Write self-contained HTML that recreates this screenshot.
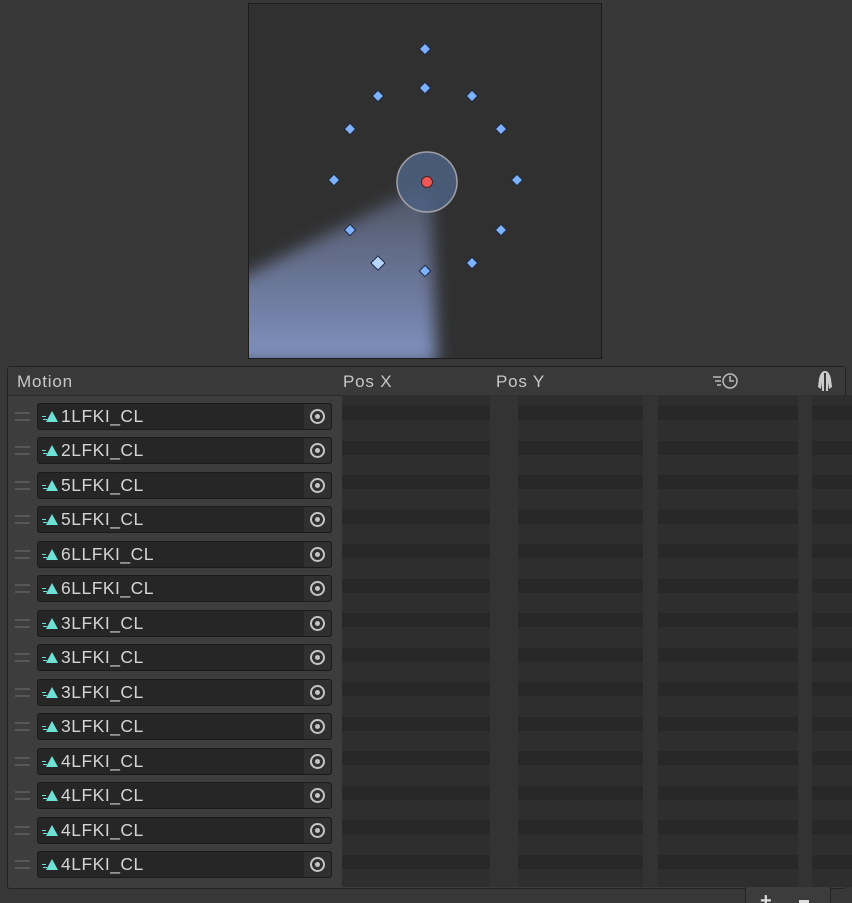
<!DOCTYPE html>
<html style="overflow:hidden;height:903px"><head><style>
body{margin:0;width:852px;height:903px;background:#383838;position:relative;overflow:hidden;font-family:"Liberation Sans",sans-serif}
.bt{position:absolute;left:248px;top:3px;width:352px;height:354px;background:#303030;border:1px solid #1c1c1c;overflow:hidden}
.panel{position:absolute;left:7px;top:366px;width:837px;height:521px;border:1px solid #232323;border-radius:3px;background:#3d3d3d}
.hdr{position:absolute;left:0;top:0;width:837px;height:28px;background:#393939;border-bottom:1px solid #2a2a2a;color:#c8c8c8;font-size:17px;letter-spacing:.8px}
.hdr span{position:absolute;top:5px}
.data{position:absolute;left:342px;top:395px;width:510px;height:492px;background:#2e2e2e}
.row{position:absolute;left:0;height:14px;width:510px;background:#282828}
.vc{position:absolute;top:395px;height:492px;background:#333}
.f{position:absolute;left:37px;width:293px;height:25px;background:#262626;border:1px solid #1b1b1b;border-radius:3px;color:#d4d4d4;font-size:17.5px;letter-spacing:.5px;line-height:25px}
.f b{position:absolute;right:0;top:0;width:27px;height:25px;background:#303030;border-radius:0 3px 3px 0}
.f b:after{content:"";position:absolute;left:6px;top:5px;width:11px;height:11px;border:2px solid #c4c4c4;border-radius:50%}
.f b:before{content:"";position:absolute;left:11px;top:10px;width:5px;height:5px;background:#c4c4c4;border-radius:50%}
.f em{position:absolute;left:8px;top:7px;width:0;height:0;border-left:6px solid transparent;border-right:6px solid transparent;border-bottom:11px solid #6fe0d6}
.f em:before{content:"";position:absolute;left:-10px;top:5px;width:4px;height:1px;background:#6fe0d6;box-shadow:1px 3px 0 #6fe0d6}
.f span{position:absolute;left:23px}
.h{position:absolute;left:15px;width:15px;height:5px;border-top:2px solid #575757;border-bottom:2px solid #575757}
</style></head><body>
<div class="bt">
<svg width="352" height="354" viewBox="0 0 352 354">
<defs>
<linearGradient id="g" x1="0" y1="0" x2="0" y2="1"><stop offset="0" stop-color="#8a9ccc" stop-opacity=".35"/><stop offset="1" stop-color="#8597c9" stop-opacity=".95"/></linearGradient>
<filter id="bl"><feGaussianBlur stdDeviation="8"/></filter>
</defs>
<polygon points="168,185 182,185 188,360 -40,360 -40,290" fill="url(#g)" filter="url(#bl)"/>
<circle cx="178" cy="178" r="30" fill="#4e6282" fill-opacity=".85" stroke="#a0a0a8" stroke-width="1.5"/>
<circle cx="178" cy="178" r="5.5" fill="#ef5656" stroke="#4a2020"/>
<g fill="#7eb2ff" stroke="#1d2a44" stroke-width="1">
<rect x="-4" y="-4" width="8" height="8" transform="translate(176,45) rotate(45)"/>
<rect x="-4" y="-4" width="8" height="8" transform="translate(176,84) rotate(45)"/>
<rect x="-4" y="-4" width="8" height="8" transform="translate(129,92) rotate(45)"/>
<rect x="-4" y="-4" width="8" height="8" transform="translate(223,92) rotate(45)"/>
<rect x="-4" y="-4" width="8" height="8" transform="translate(101,125) rotate(45)"/>
<rect x="-4" y="-4" width="8" height="8" transform="translate(252,125) rotate(45)"/>
<rect x="-4" y="-4" width="8" height="8" transform="translate(85,176) rotate(45)"/>
<rect x="-4" y="-4" width="8" height="8" transform="translate(268,176) rotate(45)"/>
<rect x="-4" y="-4" width="8" height="8" transform="translate(101,226) rotate(45)"/>
<rect x="-4" y="-4" width="8" height="8" transform="translate(252,226) rotate(45)"/>
<rect x="-5" y="-5" width="10" height="10" fill="#b7d4ff" transform="translate(129,259) rotate(45)"/>
<rect x="-4" y="-4" width="8" height="8" transform="translate(176,267) rotate(45)"/>
<rect x="-4" y="-4" width="8" height="8" transform="translate(223,259) rotate(45)"/>
</g>
</svg>
</div>
<div class="panel"><div class="hdr"><span style="left:9px">Motion</span><span style="left:335px">Pos X</span><span style="left:488px">Pos Y</span>
<svg style="position:absolute;left:704px;top:5px" width="32" height="18"><g stroke="#bbb" stroke-width="1.5" fill="none"><line x1="1" y1="5" x2="9" y2="5"/><line x1="3" y1="9" x2="9" y2="9"/><line x1="5" y1="13" x2="9" y2="13"/><circle cx="18" cy="9" r="7"/><path d="M18 4v5h4"/></g></svg>
<svg style="position:absolute;left:808px;top:3px" width="18" height="22"><path d="M9 1c-3 0-5 3-6 8l-1 8 3 2 1-7v9h2V3h2v18h2v-9l1 7 3-2-1-8c-1-5-3-8-6-8z" fill="#ccc"/></svg>
</div></div>
<div class="data">
<div class="row" style="top:11px"></div><div class="row" style="top:46px"></div><div class="row" style="top:80px"></div><div class="row" style="top:115px"></div><div class="row" style="top:149px"></div><div class="row" style="top:184px"></div><div class="row" style="top:218px"></div><div class="row" style="top:253px"></div><div class="row" style="top:287px"></div><div class="row" style="top:322px"></div><div class="row" style="top:356px"></div><div class="row" style="top:391px"></div><div class="row" style="top:425px"></div><div class="row" style="top:460px"></div>
</div>
<div class="vc" style="left:490px;width:28px"></div><div class="vc" style="left:643px;width:15px"></div><div class="vc" style="left:798px;width:14px"></div>
<div class="f" style="top:403px"><em></em><span>1LFKI_CL</span><b></b></div>
<div class="f" style="top:437px"><em></em><span>2LFKI_CL</span><b></b></div>
<div class="f" style="top:472px"><em></em><span>5LFKI_CL</span><b></b></div>
<div class="f" style="top:506px"><em></em><span>5LFKI_CL</span><b></b></div>
<div class="f" style="top:541px"><em></em><span>6LLFKI_CL</span><b></b></div>
<div class="f" style="top:575px"><em></em><span>6LLFKI_CL</span><b></b></div>
<div class="f" style="top:610px"><em></em><span>3LFKI_CL</span><b></b></div>
<div class="f" style="top:644px"><em></em><span>3LFKI_CL</span><b></b></div>
<div class="f" style="top:679px"><em></em><span>3LFKI_CL</span><b></b></div>
<div class="f" style="top:713px"><em></em><span>3LFKI_CL</span><b></b></div>
<div class="f" style="top:748px"><em></em><span>4LFKI_CL</span><b></b></div>
<div class="f" style="top:782px"><em></em><span>4LFKI_CL</span><b></b></div>
<div class="f" style="top:817px"><em></em><span>4LFKI_CL</span><b></b></div>
<div class="f" style="top:851px"><em></em><span>4LFKI_CL</span><b></b></div>
<div class="h" style="top:412px"></div><div class="h" style="top:446px"></div><div class="h" style="top:481px"></div><div class="h" style="top:515px"></div><div class="h" style="top:550px"></div><div class="h" style="top:584px"></div><div class="h" style="top:619px"></div><div class="h" style="top:653px"></div><div class="h" style="top:688px"></div><div class="h" style="top:722px"></div><div class="h" style="top:757px"></div><div class="h" style="top:791px"></div><div class="h" style="top:826px"></div><div class="h" style="top:860px"></div>
<div style="position:absolute;left:745px;top:887px;width:84px;height:16px;background:#3c3c3c;border-left:1px solid #232323;border-right:1px solid #232323"></div>
<div style="position:absolute;left:760px;top:890px;color:#ddd;font-size:20px;font-weight:bold">+</div>
<div style="position:absolute;left:799px;top:900px;width:10px;height:3px;background:#ddd"></div>
</body></html>
